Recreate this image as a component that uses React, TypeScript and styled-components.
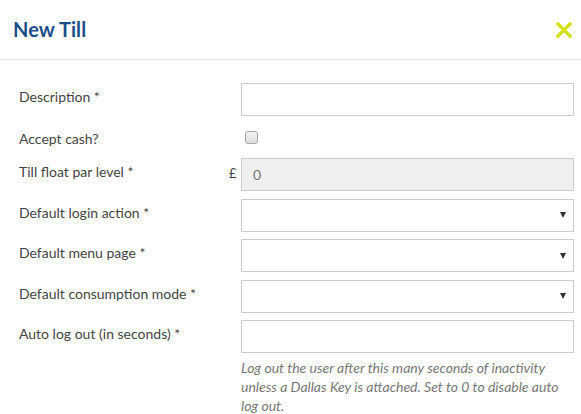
import * as React from 'react';
import styled, { createGlobalStyle } from 'styled-components';

const GlobalStyle = createGlobalStyle`
  html, body {
    margin: 0;
    padding: 0;
    background: #ffffff;
  }
  body {
    font-family: Lato, "Noto Sans", sans-serif;
    color: #4a4a4a;
  }
`;

const Modal = styled.div`
  width: 581px;
  background: #ffffff;
`;

const Header = styled.div`
  height: 59px;
  display: flex;
  align-items: center;
  justify-content: space-between;
  padding: 0 9px 0 13px;
  border-bottom: 1px solid #e6e6e6;
`;

const Title = styled.h2`
  margin: 0 0 2px;
  font-size: 20px;
  font-weight: 700;
  color: #1c4f88;
  letter-spacing: 0.1px;
`;

const CloseButton = styled.button`
  border: 0;
  background: none;
  padding: 0;
  width: 16px;
  height: 16px;
  cursor: pointer;
  display: flex;
`;

const Body = styled.form`
  display: flex;
  flex-direction: column;
  gap: 7.5px;
  padding: 23px 7px 0 19px;
`;

const Row = styled.div<{ $height?: number }>`
  display: flex;
  align-items: flex-start;
  min-height: ${(p) => p.$height ?? 33}px;
`;

const Label = styled.label<{ $top?: number }>`
  flex: 1;
  padding-top: ${(p) => p.$top ?? 5}px;
  font-size: 14px;
  line-height: 17px;
  color: #444444;
`;

const Control = styled.div`
  width: 345px;
  display: flex;
  align-items: flex-start;
`;

const Prefix = styled.span`
  width: 12px;
  padding-top: 7px;
  font-size: 13px;
  line-height: 17px;
  color: #444444;
`;

const Field = styled.div`
  flex: 1;
  display: flex;
  flex-direction: column;
`;

const TextInput = styled.input`
  box-sizing: border-box;
  width: 100%;
  height: 33px;
  border: 1px solid #cccccc;
  background: ${(p) => (p.disabled ? '#efefef' : '#ffffff')};
  padding: 0 11px;
  font-family: inherit;
  font-size: 14px;
  color: #777777;
  outline: none;
`;

const SelectBox = styled.div`
  box-sizing: border-box;
  height: 33px;
  border: 1px solid #cccccc;
  background: #ffffff;
  display: flex;
  align-items: center;
  justify-content: flex-end;
  padding-right: 7px;
`;

const Caret = styled.span`
  width: 0;
  height: 0;
  border-left: 3px solid transparent;
  border-right: 3px solid transparent;
  border-top: 6px solid #333333;
`;

const CheckBox = styled.span`
  box-sizing: border-box;
  width: 13px;
  height: 13px;
  margin: 7px 0 0 4px;
  border: 1px solid #a6a6a6;
  border-radius: 3px;
  background: linear-gradient(#f4f4f4, #dcdcdc);
`;

const Help = styled.p`
  margin: 5px 0 0;
  font-size: 14px;
  font-style: italic;
  line-height: 19px;
  color: #777777;
`;

const Select: React.FC = () => (
  <SelectBox>
    <Caret />
  </SelectBox>
);

export default function App() {
  return (
    <Modal>
      <GlobalStyle />
      <Header>
        <Title>New Till</Title>
        <CloseButton aria-label="Close">
          <svg width="16" height="16" viewBox="0 0 16 16">
            <path d="M2 2 L14 14 M14 2 L2 14" stroke="#d3df1c" strokeWidth="3.4" strokeLinecap="square" />
          </svg>
        </CloseButton>
      </Header>
      <Body>
        <Row>
          <Label>Description *</Label>
          <Control>
            <Prefix />
            <Field>
              <TextInput />
            </Field>
          </Control>
        </Row>
        <Row $height={27}>
          <Label $top={6}>Accept cash?</Label>
          <Control>
            <Prefix />
            <CheckBox />
          </Control>
        </Row>
        <Row>
          <Label>Till float par level *</Label>
          <Control>
            <Prefix>£</Prefix>
            <Field>
              <TextInput disabled value="0" readOnly />
            </Field>
          </Control>
        </Row>
        <Row>
          <Label>Default login action *</Label>
          <Control>
            <Prefix />
            <Field>
              <Select />
            </Field>
          </Control>
        </Row>
        <Row>
          <Label>Default menu page *</Label>
          <Control>
            <Prefix />
            <Field>
              <Select />
            </Field>
          </Control>
        </Row>
        <Row>
          <Label>Default consumption mode *</Label>
          <Control>
            <Prefix />
            <Field>
              <Select />
            </Field>
          </Control>
        </Row>
        <Row>
          <Label>Auto log out (in seconds) *</Label>
          <Control>
            <Prefix />
            <Field>
              <TextInput />
              <Help>
                Log out the user after this many seconds of inactivity unless a Dallas Key is
                attached. Set to 0 to disable auto log out.
              </Help>
            </Field>
          </Control>
        </Row>
      </Body>
    </Modal>
  );
}
